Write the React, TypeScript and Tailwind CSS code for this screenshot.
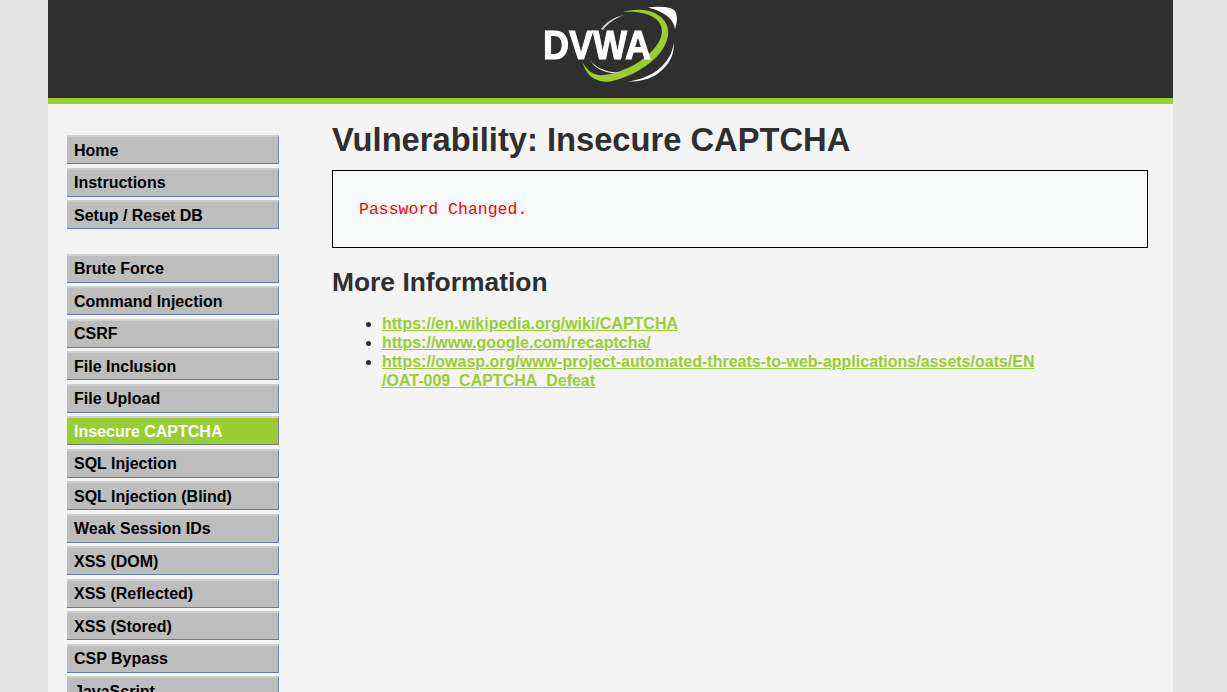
const groups = [
  ['Home', 'Instructions', 'Setup / Reset DB'],
  [
    'Brute Force',
    'Command Injection',
    'CSRF',
    'File Inclusion',
    'File Upload',
    'Insecure CAPTCHA',
    'SQL Injection',
    'SQL Injection (Blind)',
    'Weak Session IDs',
    'XSS (DOM)',
    'XSS (Reflected)',
    'XSS (Stored)',
    'CSP Bypass',
    'JavaScript',
  ],
];

const links = [
  'https://en.wikipedia.org/wiki/CAPTCHA',
  'https://www.google.com/recaptcha/',
];

function Logo() {
  return (
    <svg width="134" height="80" viewBox="0 0 134 80" className="blur-[0.4px]">
      <path d="M104 2.5 C115 1 128 2 131 6 C134 11 133 18 131 24 C130 15 122 7 104 2.5 Z" fill="#fff" />
      <path
        d="M79 7 C90 3.5 108 3 118 13 C127 22 126 35 116 48 C106 60 88 72 66 76.5 C54 78 42 72 38.5 57 C43 66 50 71 60 70 C76 68 94 60 106 48 C118 36 122 24 113 15 C106 8 92 6 79 7 Z"
        fill="#9acd32"
      />
      <path d="M83 76.5 C98 75 116 68 125 52 C128 47 129 43 129.5 38 C131 52 122 64 110 71 C102 75 92 77 83 76.5 Z" fill="#fff" />
      <path d="M57 24 C62 17 70 12 80 10 C72 13 64 18 59 25 Z" fill="#ccc" />
      <path d="M44 52 C48 60 58 67 76 68 C62 69 50 64 44 52 Z" fill="#fff" />
      <text
        x="-1"
        y="54"
        fontFamily='"Liberation Sans", sans-serif'
        fontWeight="700"
        fontSize="40"
        textLength="108"
        lengthAdjust="spacingAndGlyphs"
        fill="#fff"
        stroke="#fff"
        strokeWidth="1"
      >
        DVWA
      </text>
    </svg>
  );
}

export default function App() {
  return (
    <div className="h-screen overflow-hidden bg-[#e5e5e5] font-['Liberation_Sans',sans-serif] text-[#2f2f2f]">
      <div className="ml-12 w-[1125px] h-full bg-[#f4f4f4]">
        <header className="h-[104px] bg-[#2f2f2f] border-b-[6px] border-[#9acd32] flex justify-center pt-[5px] pl-[1px]">
          <Logo />
        </header>

        <div className="flex">
          <nav className="w-[231px] shrink-0 pl-[19px] pt-[31px]">
            {groups.map((group, i) => (
              <ul key={i} className="mb-[24.5px]">
                {group.map((item) => {
                  const active = item === 'Insecure CAPTCHA';
                  return (
                    <li
                      key={item}
                      className={`w-[212px] h-[29px] mb-[3.5px] pl-[7px] pt-[0.75px] text-base leading-[26px] font-bold border-t-2 border-r border-b border-t-[#cfcfcf] border-r-[#7284a5] border-b-[#6a7a99] ${
                        active ? 'bg-[#9acd32] text-white' : 'bg-[#bdbdbd] text-black'
                      }`}
                    >
                      {item}
                    </li>
                  );
                })}
              </ul>
            ))}
          </nav>

          <main className="w-[816px] ml-[53px] pt-[17px]">
            <h1 className="text-[32.7px] leading-[37px] font-bold">Vulnerability: Insecure CAPTCHA</h1>
            <div className="mt-[12px] h-[78px] border border-black bg-[#f8f9f9] pl-[26px] pt-[30px]">
              <pre className="font-['Liberation_Mono',monospace] text-[16.5px] leading-[18px] text-[#ff0000]">
                Password Changed.
              </pre>
            </div>
            <h2 className="mt-[20px] text-[26.4px] leading-[28px] font-bold">More Information</h2>
            <ul className="mt-[18px] pl-[50px] list-disc text-base leading-[19px] font-bold">
              {links.map((href) => (
                <li key={href}>
                  <a href={href} className="underline text-[#9acd32]">
                    {href}
                  </a>
                </li>
              ))}
              <li>
                <a
                  href="https://owasp.org/www-project-automated-threats-to-web-applications/assets/oats/EN/OAT-009_CAPTCHA_Defeat"
                  className="underline text-[#9acd32]"
                >
                  https://owasp.org/www-project-automated-threats-to-web-applications/assets/oats/EN
                  <br />
                  /OAT-009_CAPTCHA_Defeat
                </a>
              </li>
            </ul>
          </main>
        </div>
      </div>
    </div>
  );
}
